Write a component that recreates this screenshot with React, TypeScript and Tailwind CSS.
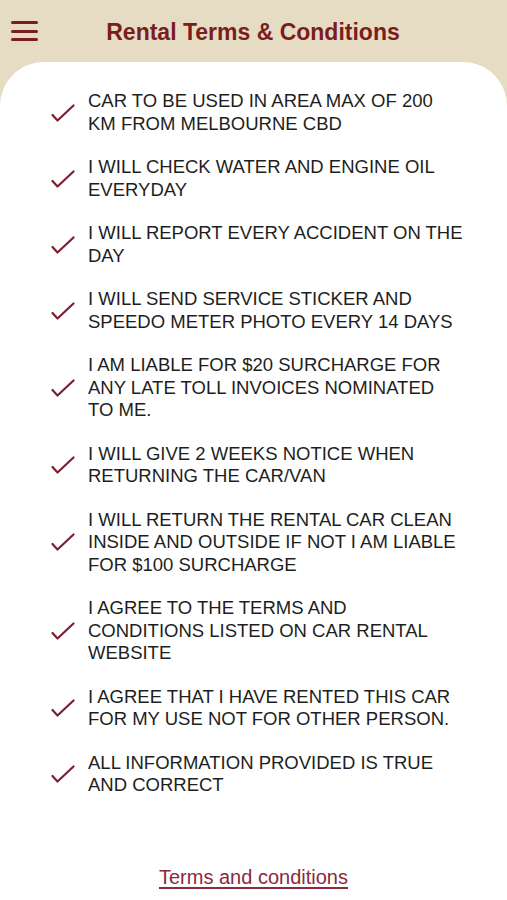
import React from "react";

// line breaks kept as in the app
const terms: string[][] = [
  ["CAR TO BE USED IN AREA MAX OF 200", "KM FROM MELBOURNE CBD"],
  ["I WILL CHECK WATER AND ENGINE OIL", "EVERYDAY"],
  ["I WILL REPORT EVERY ACCIDENT ON THE", "DAY"],
  ["I WILL SEND SERVICE STICKER AND", "SPEEDO METER PHOTO EVERY 14 DAYS"],
  ["I AM LIABLE FOR $20 SURCHARGE FOR", "ANY LATE TOLL INVOICES NOMINATED", "TO ME."],
  ["I WILL GIVE 2 WEEKS NOTICE WHEN", "RETURNING THE CAR/VAN"],
  ["I WILL RETURN THE RENTAL CAR CLEAN", "INSIDE AND OUTSIDE IF NOT I AM LIABLE", "FOR $100 SURCHARGE"],
  ["I AGREE TO THE TERMS AND", "CONDITIONS LISTED ON CAR RENTAL", "WEBSITE"],
  ["I AGREE THAT I HAVE RENTED THIS CAR", "FOR MY USE NOT FOR OTHER PERSON."],
  ["ALL INFORMATION PROVIDED IS TRUE", "AND CORRECT"],
];

function CheckMark() {
  return (
    <svg viewBox="0 0 24 24" className="w-6 h-6 shrink-0" fill="none" stroke="#7b1f33" strokeWidth="2.2" strokeLinecap="round" strokeLinejoin="round">
      <path d="M1.5 14 L6.5 19.5 L22.5 4.5" />
    </svg>
  );
}

export default function App() {
  return (
    <div className="min-h-[900px] w-full bg-[#e6dbc3] flex flex-col" style={{ fontFamily: "'Liberation Sans', Arial, sans-serif" }}>
      {/* Header */}
      <header className="h-[62px] flex items-start pt-[18px] relative">
        <button className="absolute left-[11px] top-[21px] flex flex-col gap-[5.5px]" aria-label="Menu">
          <span className="block w-[27px] h-[3px] rounded-full bg-[#7a1d1d]" />
          <span className="block w-[27px] h-[3px] rounded-full bg-[#7a1d1d]" />
          <span className="block w-[27px] h-[3px] rounded-full bg-[#7a1d1d]" />
        </button>
        <h1 className="w-full text-center text-[23px] font-bold text-[#7a1d1d] leading-[28px] pr-[1px]">
          Rental Terms &amp; Conditions
        </h1>
      </header>

      {/* Card */}
      <main className="flex-1 bg-white rounded-t-[44px] pt-[28px] pl-[51px] pr-[20px] flex flex-col">
        <ul className="flex flex-col gap-[21px]">
          {terms.map((lines) => (
            <li key={lines[0]} className="flex items-center gap-[13px]">
              <CheckMark />
              <span className="text-[18.5px] leading-[22.5px] text-[#1e1e1e]">
                {lines.map((l, i) => (
                  <span key={i} className="block whitespace-nowrap">{l}</span>
                ))}
              </span>
            </li>
          ))}
        </ul>
        <div className="flex justify-center mt-[68px] pr-[31px]">
          <a href="#" className="text-[20px] leading-[24px] text-[#8a2a3c] underline underline-offset-[3px]">
            Terms and conditions
          </a>
        </div>
      </main>
    </div>
  );
}
